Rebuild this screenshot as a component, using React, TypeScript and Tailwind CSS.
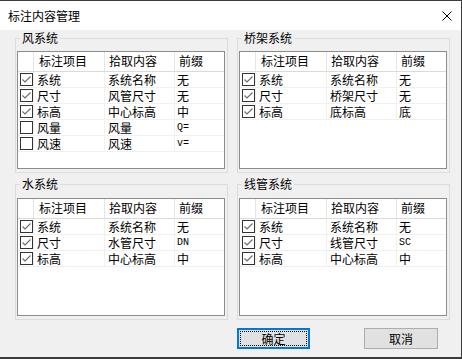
import React from "react";

type Row = { checked: boolean; item: string; pick: string; prefix: string; latin?: boolean };

const FONT = { fontFamily: '"Noto Sans CJK SC", "Noto Sans", sans-serif' };

function CheckBox({ checked }: { checked: boolean }) {
  return (
    <svg width="13" height="13" viewBox="0 0 13 13" className="block">
      <rect x="0.5" y="0.5" width="12" height="12" fill="#ffffff" stroke="#333333" />
      {checked && (
        <path d="M2.5 6.5 L5 9 L10.5 3.5" fill="none" stroke="#6a6a6a" strokeWidth="1.1" />
      )}
    </svg>
  );
}

function ListTable({ rows, mt }: { rows: Row[]; mt: string }) {
  return (
    <div className={`${mt} ml-[1px] mr-[2px] h-[118px] border border-[#8c8c8c] bg-white`}>
      <div className="flex h-[20px] border-b border-[#dadada] text-[12px] leading-[18px] text-black">
        <div className="w-[16px] border-r border-[#e5e5e5]" />
        <div className="w-[71px] border-r border-[#e5e5e5] pl-[5px]">标注项目</div>
        <div className="w-[70px] border-r border-[#e5e5e5] pl-[4px]">拾取内容</div>
        <div className="flex-1 pl-[4px]">前缀</div>
      </div>
      {rows.map((r, i) => (
        <div key={i} className="flex h-[16px] border-b border-[#f0f0f0] text-[12px] leading-[15px] text-black">
          <div className="flex w-[16px] items-center border-r border-[#f0f0f0] pl-[2px]">
            <CheckBox checked={r.checked} />
          </div>
          <div className="w-[71px] border-r border-[#f0f0f0] pl-[3px]">{r.item}</div>
          <div className="w-[70px] border-r border-[#f0f0f0] pl-[3px]">{r.pick}</div>
          {r.latin ? (
            <div
              className="flex-1 pl-[2px] text-[10px] leading-[15px]"
              style={{ fontFamily: '"Liberation Mono", monospace' }}
            >
              {r.prefix}
            </div>
          ) : (
            <div className="flex-1 pl-[2px]">{r.prefix}</div>
          )}
        </div>
      ))}
    </div>
  );
}

function Group({ title, rows, mt, h }: { title: string; rows: Row[]; mt: string; h: string }) {
  return (
    <fieldset className={`m-0 ${h} min-w-0 border border-[#dcdcdc] p-0`}>
      <legend className="ml-[4px] px-[2px] text-[12px] leading-[16px] text-black">{title}</legend>
      <ListTable rows={rows} mt={mt} />
    </fieldset>
  );
}

const wind: Row[] = [
  { checked: true, item: "系统", pick: "系统名称", prefix: "无" },
  { checked: true, item: "尺寸", pick: "风管尺寸", prefix: "无" },
  { checked: true, item: "标高", pick: "中心标高", prefix: "中" },
  { checked: false, item: "风量", pick: "风量", prefix: "Q=", latin: true },
  { checked: false, item: "风速", pick: "风速", prefix: "v=", latin: true },
];
const bridge: Row[] = [
  { checked: true, item: "系统", pick: "系统名称", prefix: "无" },
  { checked: true, item: "尺寸", pick: "桥架尺寸", prefix: "无" },
  { checked: true, item: "标高", pick: "底标高", prefix: "底" },
];
const water: Row[] = [
  { checked: true, item: "系统", pick: "系统名称", prefix: "无" },
  { checked: true, item: "尺寸", pick: "水管尺寸", prefix: "DN", latin: true },
  { checked: true, item: "标高", pick: "中心标高", prefix: "中" },
];
const conduit: Row[] = [
  { checked: true, item: "系统", pick: "系统名称", prefix: "无" },
  { checked: true, item: "尺寸", pick: "线管尺寸", prefix: "SC", latin: true },
  { checked: true, item: "标高", pick: "中心标高", prefix: "中" },
];

export default function App() {
  return (
    <div
      className="box-border h-[359px] w-[462px] overflow-hidden border-t border-r border-b-2 border-[#3c3c3c] bg-[#f0f0f0]"
      style={FONT}
    >
      <div className="flex h-[29px] items-center justify-between bg-white pl-[8px] pr-[9px]">
        <span className="text-[12px] leading-[16px] text-black">标注内容管理</span>
        <svg width="10" height="10" viewBox="0 0 10 10" className="block">
          <path d="M0.5 0.5 L9.5 9.5 M9.5 0.5 L0.5 9.5" stroke="#000" strokeWidth="1" />
        </svg>
      </div>
      <div className="grid grid-cols-[213px_213px] gap-x-[9px] gap-y-[3px] pl-[15px]">
        <Group title="风系统" rows={wind} mt="mt-[5px]" h="h-[143px]" />
        <Group title="桥架系统" rows={bridge} mt="mt-[5px]" h="h-[143px]" />
        <Group title="水系统" rows={water} mt="mt-[6px]" h="h-[144px]" />
        <Group title="线管系统" rows={conduit} mt="mt-[6px]" h="h-[144px]" />
        <div />
        <div className="mt-[5px] flex justify-between pr-[12px]">
          <button className="box-border flex h-[21px] w-[73px] items-center justify-center border-2 border-[#0078d7] bg-[#e1e1e1] p-0">
            <span className="flex h-[15px] w-[67px] items-center justify-center border border-dotted border-black text-[12px] leading-[15px] text-black">
              确定
            </span>
          </button>
          <button className="box-border flex h-[21px] w-[74px] items-center justify-center border border-[#adadad] bg-[#e1e1e1] p-0 text-[12px] leading-[15px] text-black">
            取消
          </button>
        </div>
      </div>
    </div>
  );
}
